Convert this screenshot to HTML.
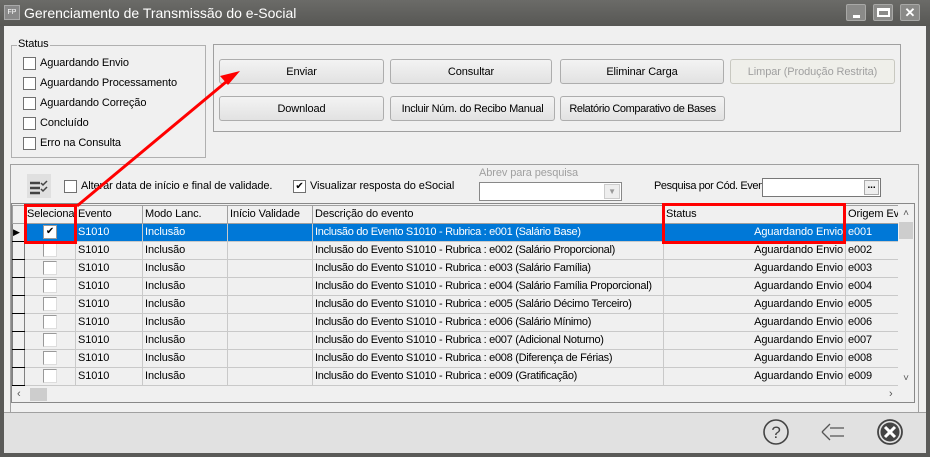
<!DOCTYPE html>
<html><head><meta charset="utf-8"><style>
*{box-sizing:border-box;margin:0;padding:0}
body{width:930px;height:457px;overflow:hidden;background:#5a5a58;font-family:"Liberation Sans",sans-serif;font-size:11px;color:#000;position:relative;letter-spacing:-0.1px}
.a{position:absolute;white-space:nowrap}
.win{left:4px;top:26px;width:922px;height:427px;background:#f0f0f0}
.title{left:0;top:0;width:930px;height:26px;background:linear-gradient(#6b6b68,#575754);color:#fff;font-size:14px;letter-spacing:0}
.btn{position:absolute;height:25px;border:1px solid #adadad;border-radius:3px;background:linear-gradient(#f3f3f3,#e2e2e2);text-align:center;line-height:24px;font-size:11px;white-space:nowrap;overflow:hidden}
.cb{position:absolute;width:13px;height:13px;border:1px solid #707070;background:#fff}
.tb{position:absolute;width:20px;height:17px;background:#8a8a88;border:1px solid #a8a8a6;border-radius:2px}
table{border-collapse:collapse;table-layout:fixed;position:absolute;left:12px;top:205px;width:886px}
tr{height:18px}
td{height:18px;border:1px solid #c9c9c9;padding:0 2px;white-space:nowrap;overflow:hidden;font-size:11px;line-height:17px}
tr.h td{background:#f0f0f0;border-color:#a0a0a0}
tr.sel td{background:#0078d7;color:#fff}
td.ind{background:#f0f0f0!important;border-color:#000 #808080;padding:0}
.c{display:inline-block;width:14px;height:14px;background:#fff;border:1px solid #999;border-right-color:#ddd;border-bottom-color:#ddd;vertical-align:middle}
.d{letter-spacing:-0.3px}
</style></head><body>
<div class="a title"><div class="a" style="left:4px;top:5px;width:16px;height:15px;background:#888;border:1px solid #aaa;font-size:7px;line-height:13px;text-align:center;color:#fff">FP</div><div class="a" style="left:24px;top:5px">Gerenciamento de Transmissão do e-Social</div>
<div class="tb" style="left:846px;top:4px"><div class="a" style="left:6px;top:10px;width:7px;height:3px;background:#fff"></div></div>
<div class="tb" style="left:873px;top:4px"><div class="a" style="left:3px;top:3px;width:13px;height:9px;border:2px solid #fff;border-top-width:3px"></div></div>
<div class="tb" style="left:900px;top:4px;color:#fff;font-weight:bold;font-size:13px;text-align:center;line-height:15px">✕</div></div>
<div class="a win"></div>
<div class="a" style="left:11px;top:45px;width:195px;height:113px;border:1px solid #b0b0b0"></div>
<div class="a" style="left:17px;top:38px;background:#f0f0f0;padding:0 1px">Status</div>
<div class="cb" style="left:23px;top:57px"></div><div class="a" style="left:40px;top:57px">Aguardando Envio</div>
<div class="cb" style="left:23px;top:77px"></div><div class="a" style="left:40px;top:77px">Aguardando Processamento</div>
<div class="cb" style="left:23px;top:97px"></div><div class="a" style="left:40px;top:97px">Aguardando Correção</div>
<div class="cb" style="left:23px;top:117px"></div><div class="a" style="left:40px;top:117px">Concluído</div>
<div class="cb" style="left:23px;top:137px"></div><div class="a" style="left:40px;top:137px">Erro na Consulta</div>
<div class="a" style="left:213px;top:44px;width:688px;height:88px;border:1px solid #a0a0a0"></div>
<div class="btn" style="left:219px;top:59px;width:165px">Enviar</div>
<div class="btn" style="left:390px;top:59px;width:162px">Consultar</div>
<div class="btn" style="left:560px;top:59px;width:164px">Eliminar Carga</div>
<div class="btn" style="left:730px;top:59px;width:165px;color:#a0a0a0;background:#efefea;border-color:#c8c8c0">Limpar (Produção Restrita)</div>
<div class="btn" style="left:219px;top:96px;width:165px">Download</div>
<div class="btn" style="left:390px;top:96px;width:165px;letter-spacing:-0.3px">Incluir Núm. do Recibo Manual</div>
<div class="btn" style="left:560px;top:96px;width:165px;letter-spacing:-0.4px">Relatório Comparativo de Bases</div>
<div class="a" style="left:10px;top:164px;width:909px;height:248px;border:1px solid #a0a0a0;border-bottom:none"></div>
<div class="a" style="left:27px;top:174px;width:24px;height:24px;background:#e0e0e0"><svg width="24" height="24"><path d="M3 9h10M3 14h10M3 19h10" stroke="#444" stroke-width="2.5"/><path d="M14 9l2 2 4-4M14 15l2 2 4-4" stroke="#444" stroke-width="1.5" fill="none"/></svg></div>
<div class="cb" style="left:64px;top:180px"></div><div class="a" style="left:81px;top:180px">Alterar data de início e final de validade.</div>
<div class="cb" style="left:293px;top:180px;font-size:10px;line-height:11px;text-align:center">✔</div><div class="a" style="left:310px;top:180px">Visualizar resposta do eSocial</div>
<div class="a" style="left:479px;top:167px;color:#a0a0a0">Abrev para pesquisa</div>
<div class="a" style="left:479px;top:182px;width:143px;height:19px;background:#fff;border:1px solid #888"><div class="a" style="right:1px;top:1px;width:16px;height:15px;background:#eee;border:1px solid #ccc;color:#999;font-size:8px;text-align:center;line-height:14px">▼</div></div>
<div class="a" style="left:654px;top:180px;letter-spacing:-0.4px">Pesquisa por Cód. Evento:</div>
<div class="a" style="left:762px;top:178px;width:119px;height:19px;background:#fff;border:1px solid #777"><div class="a" style="right:1px;top:1px;width:15px;height:15px;background:#eee;border:1px solid #aaa;font-size:10px;font-weight:bold;text-align:center;line-height:10px">...</div></div>
<div class="a" style="left:11px;top:203px;width:904px;height:200px;border:1px solid #888;background:#f0f0f0"></div>
<div class="a" style="left:12px;top:205px;width:886px;height:181px;overflow:hidden">
<table style="left:0;top:0">
<colgroup><col style="width:12px"><col style="width:51px"><col style="width:67px"><col style="width:85px"><col style="width:85px"><col style="width:351px"><col style="width:182px"><col style="width:53px"></colgroup>
<tr class="h"><td class="ind"></td><td>Seleciona</td><td>Evento</td><td>Modo Lanc.</td><td>Início Validade</td><td>Descrição do evento</td><td>Status</td><td>Origem Eve</td></tr>
<tr class="sel"><td class="ind" style="font-size:9px;color:#000">▶</td><td style="text-align:center"><span class="c" style="color:#000;font-size:10px;line-height:12px;border-color:#999">✔</span></td><td>S1010</td><td>Inclusão</td><td></td><td class="d">Inclusão do Evento S1010 - Rubrica : e001 (Salário Base)</td><td style="text-align:right">Aguardando Envio</td><td>e001</td></tr>
<tr><td class="ind"></td><td style="text-align:center"><span class="c"></span></td><td>S1010</td><td>Inclusão</td><td></td><td class="d">Inclusão do Evento S1010 - Rubrica : e002 (Salário Proporcional)</td><td style="text-align:right">Aguardando Envio</td><td>e002</td></tr>
<tr><td class="ind"></td><td style="text-align:center"><span class="c"></span></td><td>S1010</td><td>Inclusão</td><td></td><td class="d">Inclusão do Evento S1010 - Rubrica : e003 (Salário Família)</td><td style="text-align:right">Aguardando Envio</td><td>e003</td></tr>
<tr><td class="ind"></td><td style="text-align:center"><span class="c"></span></td><td>S1010</td><td>Inclusão</td><td></td><td class="d">Inclusão do Evento S1010 - Rubrica : e004 (Salário Família Proporcional)</td><td style="text-align:right">Aguardando Envio</td><td>e004</td></tr>
<tr><td class="ind"></td><td style="text-align:center"><span class="c"></span></td><td>S1010</td><td>Inclusão</td><td></td><td class="d">Inclusão do Evento S1010 - Rubrica : e005 (Salário Décimo Terceiro)</td><td style="text-align:right">Aguardando Envio</td><td>e005</td></tr>
<tr><td class="ind"></td><td style="text-align:center"><span class="c"></span></td><td>S1010</td><td>Inclusão</td><td></td><td class="d">Inclusão do Evento S1010 - Rubrica : e006 (Salário Mínimo)</td><td style="text-align:right">Aguardando Envio</td><td>e006</td></tr>
<tr><td class="ind"></td><td style="text-align:center"><span class="c"></span></td><td>S1010</td><td>Inclusão</td><td></td><td class="d">Inclusão do Evento S1010 - Rubrica : e007 (Adicional Noturno)</td><td style="text-align:right">Aguardando Envio</td><td>e007</td></tr>
<tr><td class="ind"></td><td style="text-align:center"><span class="c"></span></td><td>S1010</td><td>Inclusão</td><td></td><td class="d">Inclusão do Evento S1010 - Rubrica : e008 (Diferença de Férias)</td><td style="text-align:right">Aguardando Envio</td><td>e008</td></tr>
<tr><td class="ind"></td><td style="text-align:center"><span class="c"></span></td><td>S1010</td><td>Inclusão</td><td></td><td class="d">Inclusão do Evento S1010 - Rubrica : e009 (Gratificação)</td><td style="text-align:right">Aguardando Envio</td><td>e009</td></tr>
</table></div>
<div class="a" style="left:898px;top:205px;width:16px;height:181px;background:#f0f0f0;color:#555;font-size:10px;text-align:center"><div style="height:17px;line-height:17px">˄</div><div style="height:17px;background:#cdcdcd;margin:0 1px"></div><div class="a" style="bottom:0;width:16px;line-height:14px">˅</div></div>
<div class="a" style="left:12px;top:387px;width:886px;height:15px;background:#f0f0f0;color:#555;font-size:11px;line-height:15px"><span class="a" style="left:5px">‹</span><div class="a" style="left:18px;top:1px;width:17px;height:13px;background:#cdcdcd"></div><span class="a" style="left:877px">›</span></div>
<div class="a" style="left:4px;top:412px;width:922px;height:41px;background:#e1e1e1;border-top:1px solid #a0a0a0"></div>
<svg class="a" style="left:760px;top:417px" width="150" height="32">
<circle cx="16" cy="15" r="12" fill="none" stroke="#444" stroke-width="1.6"/><text x="16" y="21" font-family="Liberation Sans" font-size="17" text-anchor="middle" fill="#444">?</text>
<path d="M62 15l8-8M62 15l8 8M70 11h14M70 19h14" stroke="#555" stroke-width="1.3" fill="none"/>
<circle cx="130" cy="15" r="12" fill="none" stroke="#444" stroke-width="1.8"/><circle cx="130" cy="15" r="9.5" fill="#444"/><path d="M125 10l10 10M135 10l-10 10" stroke="#fff" stroke-width="3"/>
</svg>
<div class="a" style="left:24px;top:204px;width:53px;height:40px;border:3px solid #f00"></div>
<div class="a" style="left:662px;top:203px;width:184px;height:41px;border:3px solid #f00"></div>
<svg class="a" style="left:0;top:0" width="930" height="457"><line x1="77" y1="206" x2="226" y2="82" stroke="#f00" stroke-width="3"/><path d="M240 71l-20 5 8 9z" fill="#f00"/></svg>
</body></html>
